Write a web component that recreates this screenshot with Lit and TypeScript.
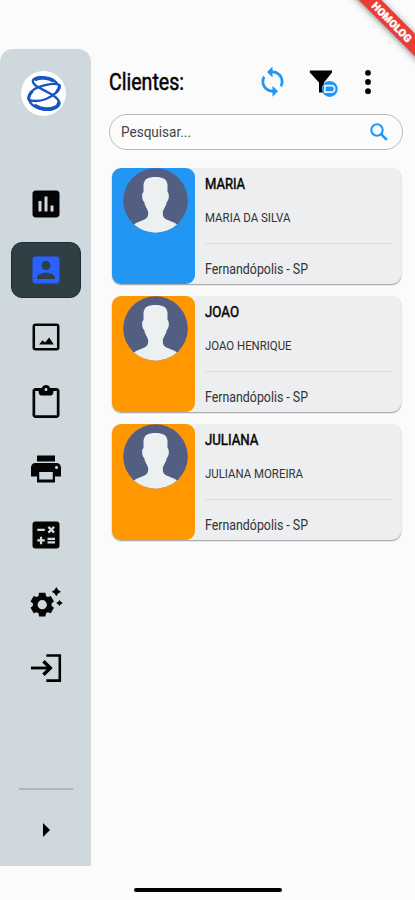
import { LitElement, html, svg, css } from "lit";
import { customElement, property } from "lit/decorators.js";

/** Single line of condensed text, fitted to a given width. */
@customElement("fit-text")
class FitText extends LitElement {
  @property() text = "";
  @property({ type: Number }) width = 50;
  @property({ type: Number }) size = 14;
  static styles = css`
    :host { display: block; line-height: 0; }
    svg { display: block; overflow: visible; }
    text { font-family: Roboto, "Liberation Sans", sans-serif; fill: currentColor; }
  `;
  render() {
    return html`<svg width=${this.width} height=${this.size}>
      <text x="0" y=${this.size * 0.86} font-size=${this.size} textLength=${this.width}
        lengthAdjust="spacingAndGlyphs">${this.text}</text></svg>`;
  }
}

const icons: Record<string, unknown> = {
  chart: svg`<path d="M19 3H5c-1.1 0-2 .9-2 2v14c0 1.1.9 2 2 2h14c1.1 0 2-.9 2-2V5c0-1.1-.9-2-2-2zM9 17H7v-7h2v7zm4 0h-2V7h2v10zm4 0h-2v-4h2v4z"/>`,
  person: svg`<path d="M3 5v14c0 1.1.89 2 2 2h14c1.1 0 2-.9 2-2V5c0-1.1-.9-2-2-2H5c-1.11 0-2 .9-2 2zm12 4c0 1.66-1.34 3-3 3s-3-1.34-3-3 1.34-3 3-3 3 1.34 3 3zm-9 8c0-2 4-3.1 6-3.1s6 1.1 6 3.1v1H6v-1z"/>`,
  photo: svg`<path fill-rule="evenodd" d="M5 3h14a2 2 0 0 1 2 2v14a2 2 0 0 1-2 2H5a2 2 0 0 1-2-2V5a2 2 0 0 1 2-2zM4.7 4.7v14.6h14.6V4.7z"/><path d="M7.400 17l2.300-2.800 1.700 1.500 2.700-3.300 3.100 4.600z"/>`,
  clipboard: svg`<path d="M19 2h-4.18C14.4.84 13.3 0 12 0c-1.3 0-2.4.84-2.82 2H5c-1.1 0-2 .9-2 2v16c0 1.1.9 2 2 2h14c1.1 0 2-.9 2-2V4c0-1.1-.9-2-2-2zm-7 0c.55 0 1 .45 1 1s-.45 1-1 1-1-.45-1-1 .45-1 1-1zm7.2 18.2H4.800V4H7c0 1.700.6 3 2 3h6c1.400 0 2-1.300 2-3h2.200z"/>`,
  print: svg`<path d="M19 8H5c-1.66 0-3 1.34-3 3v6h4v4h12v-4h4v-6c0-1.66-1.34-3-3-3zm-2.500 11h-9v-5h9v5zm2.500-7c-.55 0-1-.45-1-1s.45-1 1-1 1 .45 1 1-.45 1-1 1zm-1-9H6v4h12V3z"/>`,
  calc: svg`<rect x="3" y="3" width="18" height="18" rx="2"/><path fill="none" stroke="#cfd8dc" stroke-width="1.5" d="M6.200 8.500h5M13.600 6.600l3.800 3.800M17.400 6.600l-3.800 3.800M6.200 15.600h5M8.700 13.100v5M13 14.500h5M13 16.900h5"/>`,
  gear: svg`<path fill-rule="evenodd" d="M7.400 5.900h4.200l.4 2.100 1.200.7 2-.7 2.100 3.600-1.600 1.400v1.500l1.600 1.400-2.100 3.600-2-.7-1.200.7-.4 2.100H7.400L7 19.500l-1.200-.7-2 .7-2.100-3.600 1.600-1.400V13l-1.600-1.400L3.800 8l2 .7L7 8zM9.500 10.700a3.100 3.100 0 1 0 0 6.200a3.100 3.100 0 1 0 0-6.200z"/><path d="M18.900 2q.8 2.300 3.100 3.100q-2.300.8-3.100 3.100q-.8-2.300-3.100-3.100q2.300-.8 3.100-3.100zM21 10.700q.6 1.400 2.300 2q-1.700.6-2.300 2q-.6-1.400-2.300-2q1.700-.6 2.300-2z"/>`,
  exit: svg`<path fill="none" stroke="#000" stroke-width="1.700" d="M12.200 3.600h9v16.800h-9"/><path fill="none" stroke="#000" stroke-width="1.900" d="M2 12h12"/><path fill="none" stroke="#000" stroke-width="2.200" d="M10.300 7.500L14.900 12l-4.600 4.500"/>`,
};

const clients = [
  { name: "MARIA", nw: 40, full: "MARIA DA SILVA", fw: 85.5, color: "#2196f3" },
  { name: "JOAO", nw: 34, full: "JOAO HENRIQUE", fw: 86.5, color: "#ff9800" },
  { name: "JULIANA", nw: 53.5, full: "JULIANA MOREIRA", fw: 98, color: "#ff9800" },
];

@customElement("app-root")
class AppRoot extends LitElement {
  static styles = css`
    :host { display: block; }
    * { box-sizing: border-box; }
    svg { display: block; overflow: visible; }
    .screen { position: relative; width: 415px; height: 900px; overflow: hidden;
      background: #fbfbfb; display: flex; padding-top: 48.5px; color: #050505; }
    .side { width: 90.5px; height: 817.5px; flex: none; background: #cfd8dc;
      border-radius: 13px 13px 0 0; display: flex; flex-direction: column; align-items: center; }
    .logo { width: 45px; height: 45px; border-radius: 50%; background: #fff;
      margin: 22px 3px 0 0; flex: none; }
    .nav { display: flex; flex-direction: column; gap: 10.300px; margin: 60.500px 0 0 1px; }
    .item { width: 70px; height: 56px; border-radius: 11px; display: flex;
      align-items: center; justify-content: center; }
    .active { background: #2f3f43; border: 1.500px solid #15303a; color: #2962ff; }
    .item svg { fill: currentColor; }
    .rule { width: 54px; height: 1.500px; background: #aeb8bb; margin: auto 0 0 1px; }
    .expand { margin: 33px 0 29.500px 2px; }
    .main { flex: 1; padding: 17px 12px 0 18.500px; }
    .bar { display: flex; align-items: center; height: 32px; }
    .title { flex: 1; color: #050505; stroke: #050505; stroke-width: .55px; padding-top: 1px; }
    .tools { display: flex; align-items: center; }
    .search { height: 36px; border: 1.300px solid #b9b9b9; border-radius: 18px; margin-top: 16px;
      display: flex; align-items: center; justify-content: space-between; padding: 0 13px 0 11px;
      color: #444; background: #fcfcfc; }
    .list { display: flex; flex-direction: column; gap: 12px; padding: 18px 2px 0 3px; }
    .card { height: 116px; border-radius: 9px; background: #eceeef; display: flex;
      box-shadow: 0 1px 1.500px #0006; }
    .photo { width: 83px; border-radius: 9px; flex: none; padding-left: 10.500px; }
    .info { flex: 1; padding: 9.500px 10px 0; }
    .name { color: #060606; stroke: #060606; stroke-width: .5px; }
    .full { margin-top: 19.500px; color: #333; }
    .line { height: 1.500px; background: #d7dadc; margin-top: 18.500px; }
    .city { margin-top: 18px; color: #333; }
    .ribbon { position: absolute; right: -36.500px; top: 14px; width: 120px; height: 16px;
      background: #ed3b35; transform: rotate(45deg); box-shadow: 0 1px 6px #0007;
      display: flex; align-items: center; justify-content: center; color: #fff;
      -webkit-text-stroke: .4px #fff; font: 900 10.500px Roboto, sans-serif; letter-spacing: .1px; }
    .home { position: absolute; left: 134px; top: 887.500px; width: 148px; height: 4.500px;
      border-radius: 3px; background: #000; }
    .filter { margin-left: 20.500px; }
    .more { margin: 0 31px 0 24.500px; }
  `;

  icon(name: string) {
    return html`<svg width="36" height="36" viewBox="0 0 24 24">${icons[name]}</svg>`;
  }

  card(c: (typeof clients)[number]) {
    return html`<div class="card">
      <div class="photo" style="background:${c.color}">
        <svg width="65" height="65" viewBox="0 0 65 65">
          <circle cx="32.5" cy="32.5" r="32.3" fill="#535f82"/>
          <path fill="#ecf0f1" d="M20.500 24V17C21 11 25 9 32.500 9S44 11 44.500 17V24C46.500 25 46.300 32 43.800 34C43 39 40 41 39.800 45C39.800 50 42 51 46 52.500Q51.500 54.500 54 56.500A32.300 32.300 0 0 1 11 56.500Q13.500 54.500 19 52.500C23 51 25.200 50 25.200 45C25 41 22 39 21.200 34C18.700 32 18.500 25 20.500 24Z"/>
        </svg>
      </div>
      <div class="info">
        <fit-text class="name" .text=${c.name} .width=${c.nw} .size=${14.5}></fit-text>
        <fit-text class="full" .text=${c.full} .width=${c.fw} .size=${13}></fit-text>
        <div class="line"></div>
        <fit-text class="city" .text=${"Fernandópolis - SP"} .width=${103} .size=${14}></fit-text>
      </div>
    </div>`;
  }

  render() {
    return html`<div class="screen">
      <div class="side">
        <div class="logo">
          <svg width="45" height="45" viewBox="63 212 135 135" fill="none" stroke="#1754c4" stroke-linecap="round" stroke-linejoin="round">
            <path stroke-width="7" d="M172 250C160 234 128 228 108 233C90 239 99 253 120 264C150 279 176 291 178 308C178 324 150 331 125 326C102 321 89 309 86 296C85 280 98 267 113 261C138 251 168 247 178 254C184 268 160 287 138 296C118 304 94 304 85 296"/>
            <path stroke-width="11" d="M158 240C145 233 122 230 108 236M176 308C177 320 155 328 136 326C124 325 114 322 107 317"/>
            <path stroke-width="9" d="M86 294Q87 282 96 274M178 256Q178 266 171 273"/>
          </svg>
        </div>
        <div class="nav">
          ${Object.keys(icons).map((n) => html`<div class="item ${n === "person" ? "active" : ""}">${this.icon(n)}</div>`)}
        </div>
        <div class="rule"></div>
        <svg class="expand" width="7" height="14" viewBox="0 0 7 14"><path d="M0 0L7 7L0 14Z"/></svg>
      </div>
      <div class="main">
        <div class="bar">
          <fit-text class="title" .text=${"Clientes:"} .width=${75} .size=${23.5}></fit-text>
          <div class="tools">
            <svg width="33" height="33" viewBox="0 0 24 24" fill="#2196f3">
              <path d="M12 4V1L8 5l4 4V6c3.310 0 6 2.690 6 6 0 1.010-.25 1.970-.7 2.800l1.460 1.460C19.540 15.030 20 13.570 20 12c0-4.420-3.580-8-8-8zm0 14c-3.310 0-6-2.690-6-6 0-1.010.25-1.970.7-2.800L5.240 7.740C4.460 8.970 4 10.430 4 12c0 4.420 3.580 8 8 8v3l4-4-4-4v3z"/>
            </svg>
            <svg class="filter" width="30" height="30" viewBox="0 0 30 30">
              <path d="M-.2 3.500H22V5.500L14 15.500V25.500H9V15.500L-.2 5.500Z"/>
              <circle cx="19.700" cy="21.900" r="8" fill="#2196f3"/>
              <path fill="none" stroke="#e4f3fd" stroke-width="1.700" d="M14.900 18.700H20.900Q24.600 18.700 24.600 21.900T20.900 25.100H14.900Z"/>
            </svg>
            <svg class="more" width="8" height="28" viewBox="0 0 8 28">
              <circle cx="4" cy="4.800" r="2.900"/><circle cx="4" cy="14" r="2.900"/><circle cx="4" cy="23.200" r="2.900"/>
            </svg>
          </div>
        </div>
        <div class="search">
          <fit-text .text=${"Pesquisar..."} .width=${70} .size=${15}></fit-text>
          <svg width="20" height="20" viewBox="0 0 20 20" fill="none" stroke="#2196f3">
            <circle cx="8" cy="8" r="5.700" stroke-width="2.100"/><path stroke-width="2.500" d="M12 12L17.800 17.800"/>
          </svg>
        </div>
        <div class="list">${clients.map((c) => this.card(c))}</div>
      </div>
      <div class="ribbon">HOMOLOG</div>
      <div class="home"></div>
    </div>`;
  }
}
